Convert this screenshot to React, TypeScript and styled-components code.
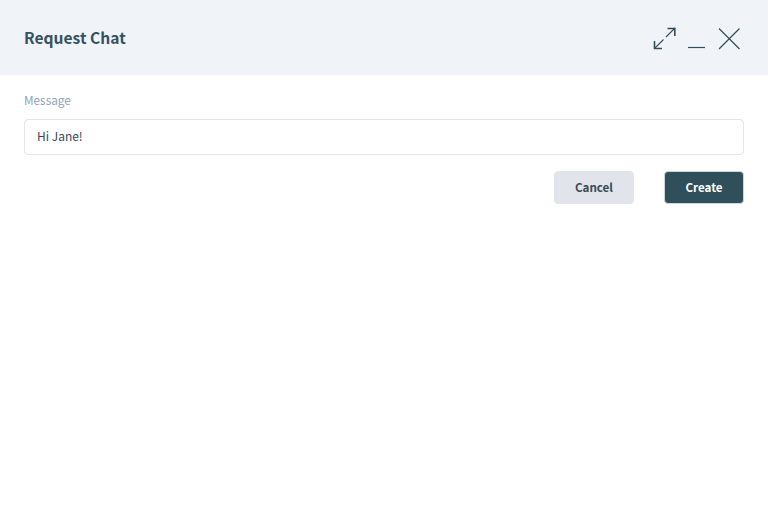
import styled, { createGlobalStyle } from 'styled-components';

const GlobalStyle = createGlobalStyle`
	body {
		margin: 0;
		background: #fff;
		font-family: 'Noto Sans CJK SC', 'Noto Sans', sans-serif;
	}
`;

const Page = styled.div`
	width: 768px;
	height: 525px;
	overflow: hidden;
`;

const Header = styled.header`
	display: flex;
	align-items: center;
	justify-content: space-between;
	height: 75px;
	padding: 0 24px;
	box-sizing: border-box;
	background: #f0f3f8;
`;

const Title = styled.h1`
	margin: 0 0 2px;
	font-size: 15.6px;
	line-height: 24px;
	font-weight: 700;
	color: #34525f;
`;

const Actions = styled.div`
	display: flex;
	align-items: center;
	gap: 8px;
	margin-right: 3px;
`;

const IconButton = styled.button`
	display: block;
	padding: 0;
	border: 0;
	background: none;
	width: 24px;
	height: 24px;
	color: #2f4f5b;

	svg {
		display: block;
	}
`;

const Form = styled.form`
	display: flex;
	flex-direction: column;
	padding: 16px 24px 0;
`;

const Label = styled.label`
	font-size: 11.8px;
	line-height: 18px;
	height: 20px;
	margin-bottom: 8px;
	color: #8fa4b8;
`;

const Input = styled.input`
	height: 36px;
	box-sizing: border-box;
	padding: 0 12px 4px;
	border: 1px solid #e3e5e9;
	border-radius: 4px;
	font-family: inherit;
	font-size: 12px;
	color: #3a4750;
	outline: none;
`;

const Buttons = styled.div`
	display: flex;
	justify-content: flex-end;
	gap: 30px;
	margin-top: 16px;
`;

const Button = styled.button<{ $primary?: boolean }>`
	width: 80px;
	height: 33px;
	box-sizing: border-box;
	padding: 0 0 2px;
	border-radius: 4px;
	border: 1px solid ${(p) => (p.$primary ? '#cfd6de' : '#e1e5eb')};
	background: ${(p) => (p.$primary ? '#2f4f5b' : '#e1e5eb')};
	color: ${(p) => (p.$primary ? '#fff' : '#3a4a55')};
	font-family: inherit;
	font-size: 11.6px;
	font-weight: 700;
	line-height: 20px;
`;

const App = () => (
	<Page>
		<GlobalStyle />
		<Header>
			<Title>Request Chat</Title>
			<Actions>
				<IconButton type="button" aria-label="Expand">
					<svg width="24" height="24" viewBox="0 0 24 24" fill="none" stroke="currentColor" strokeWidth="1.1">
						<path d="M1.5 22.5 L10.5 13.5 M13 11 L22 2" />
						<path d="M1.5 15 V22.5 H9 M14.5 2.5 H21.8 V10" strokeWidth="1.6" />
					</svg>
				</IconButton>
				<IconButton type="button" aria-label="Minimise">
					<svg width="24" height="24" viewBox="0 0 24 24" fill="none" stroke="currentColor" strokeWidth="1.2">
						<path d="M3 21.5 H20" />
					</svg>
				</IconButton>
				<IconButton type="button" aria-label="Close">
					<svg width="24" height="24" viewBox="0 0 24 24" fill="none" stroke="currentColor" strokeWidth="1.2">
						<path d="M2 2.5 L22.5 23 M22.5 2.5 L2 23" />
					</svg>
				</IconButton>
			</Actions>
		</Header>
		<Form>
			<Label htmlFor="message">Message</Label>
			<Input id="message" defaultValue="Hi Jane!" />
			<Buttons>
				<Button type="button">Cancel</Button>
				<Button type="button" $primary>
					Create
				</Button>
			</Buttons>
		</Form>
	</Page>
);

export default App;
